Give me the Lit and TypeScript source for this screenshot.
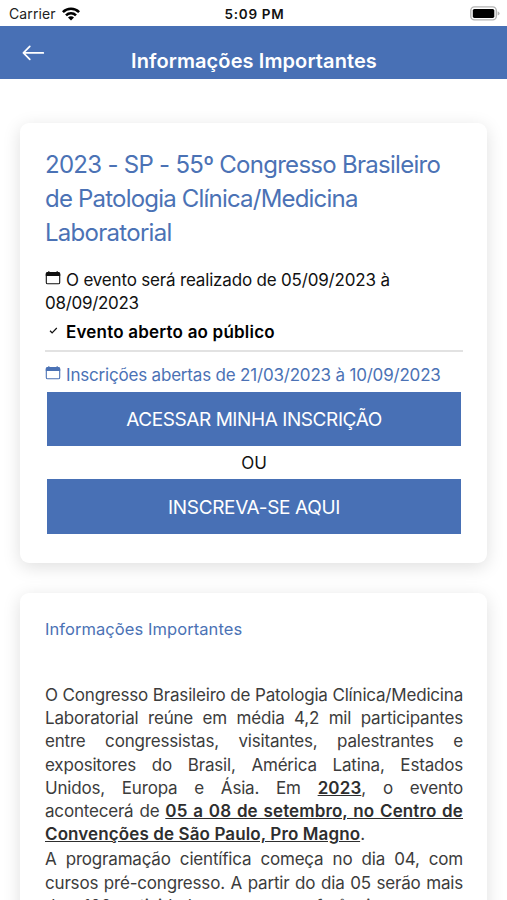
import { LitElement, html, css } from "lit";
import { customElement } from "lit/decorators.js";

const calendar = html`<svg class="cal" viewBox="0 0 16 14" width="16" height="14" aria-hidden="true">
  <path d="M3.8 .2v2M12.2 .2v2" stroke="currentColor" stroke-width="1.3" />
  <rect x="1.3" y="1.7" width="13.4" height="11.1" rx="1.4" fill="none" stroke="currentColor" stroke-width="1.1" />
  <path d="M.8 5V2.7Q.8 1.1 2.4 1.1H13.6Q15.2 1.1 15.2 2.7V5Z" fill="currentColor" />
</svg>`;

@customElement("app-root")
export class AppRoot extends LitElement {
  static styles = css`
    :host {
      display: flex;
      flex-direction: column;
      height: 900px;
      overflow: hidden;
      background: #fff;
      color: #111;
      font: 400 17px/23px Inter, "Liberation Sans", sans-serif;
    }
    * { box-sizing: border-box; }
    svg { display: block; flex: none; }
    .status {
      flex: none;
      height: 26px;
      display: grid;
      grid-template-columns: 1fr auto 1fr;
      align-items: center;
      padding: 1px 7px 0 9px;
      font-size: 14px;
      line-height: 20px;
    }
    .carrier { display: flex; align-items: center; gap: 6px; color: #222; }
    .c { letter-spacing: 0.1px; }
    .time { font-weight: 600; font-size: 13.5px; letter-spacing: 0.7px; }
    .battery { justify-self: end; }
    .bar {
      flex: none;
      height: 53px;
      background: #4870b5;
      color: #fff;
      display: grid;
      grid-template-columns: 60px 1fr 60px;
    }
    .back { margin: 19px 0 0 22px; }
    .bar h1 {
      margin: 22px 0 0;
      padding-left: 1px;
      text-align: center;
      font-size: 20px;
      line-height: 26px;
      font-weight: 600;
      letter-spacing: 0.1px;
      white-space: nowrap;
    }
    main { flex: 1; min-height: 0; padding: 44px 20px 0; }
    .card {
      background: #fff;
      border-radius: 9px;
      box-shadow: 0 4px 18px rgba(0, 0, 0, 0.13);
      padding: 25px 24px 0 25px;
      white-space: nowrap;
    }
    .event { height: 440px; }
    .info { height: 400px; margin-top: 30px; }
    .line { display: block; }
    h2 {
      margin: 0;
      color: #4b72b5;
      font-size: 24px;
      line-height: 34px;
      font-weight: 400;
      letter-spacing: -0.72px;
    }
    h2 .line:nth-child(2) { letter-spacing: -0.8px; }
    .when { margin-top: 19px; letter-spacing: -0.18px; }
    .when .line { letter-spacing: -0.3px; }
    .row { display: flex; gap: 5px; }
    .cal { margin-top: 2px; }
    .open { margin-top: 6px; color: #000; font-weight: 600; letter-spacing: 0.2px; }
    .tick { margin: 5px 0 0; }
    .rule { height: 2px; background: #e2e2e2; margin-top: 6px; }
    .signup { margin-top: 12px; color: #4b72b5; letter-spacing: -0.19px; }
    .btn {
      display: block;
      width: 414px;
      height: 54px;
      margin: 5px 0 0 2px;
      padding: 0;
      border: 0;
      background: #4870b5;
      color: #fff;
      font: inherit;
      font-size: 19px;
      line-height: 56px;
      letter-spacing: -0.42px;
      text-align: center;
    }
    .or { text-align: center; height: 24px; line-height: 24px; margin: 5px 0 4px; }
    .or + .btn { height: 55px; margin-top: 0; letter-spacing: -0.34px; line-height: 58px; }
    h3 {
      margin: 0;
      font-size: 16.5px;
      line-height: 22px;
      font-weight: 400;
      letter-spacing: 0.07px;
      color: #4b72b5;
    }
    .text { color: #3c3c3c; margin: 44px 0 0; letter-spacing: -0.19px; }
    .text + .text { margin-top: 2px; }
    .text .line { text-align: justify; text-align-last: justify; height: 23.2px; }
    .text .end { text-align-last: left; }
    b { font-weight: 600; text-decoration: underline; color: #2e2e2e; letter-spacing: 0.11px; }
  `;

  render() {
    return html`
      <div class="status">
        <div class="carrier">
          <span class="c">Carrier</span>
          <svg width="18" height="14" viewBox="0 0 18 14" aria-hidden="true">
            <g fill="none" stroke="#000" stroke-width="2.6">
              <path d="M.9 5.1A11.5 11.5 0 0 1 17.1 5.1" />
              <path d="M4 8.3A7.1 7.1 0 0 1 14 8.3" />
            </g>
            <path d="M6 10.4A4.2 4.2 0 0 1 12 10.4L9 13.5Z" />
          </svg>
        </div>
        <div class="time">5:09 PM</div>
        <svg class="battery" width="31" height="15" viewBox="0 0 31 15" aria-hidden="true">
          <rect x="1.8" y=".9" width="25.5" height="13" rx="3.6" fill="#fff" stroke="#b4b4b4" stroke-width="1.4" />
          <rect x="3.8" y="2.9" width="21.5" height="9" rx="1.6" />
          <path d="M28.6 5.2Q30.6 6 30.6 7.4T28.6 9.6Z" fill="#b4b4b4" />
        </svg>
      </div>
      <header class="bar">
        <svg class="back" width="23" height="16" viewBox="0 0 23 16" aria-label="Voltar">
          <path d="M21.3 7.9H1.5M7.8 1.4L1.4 7.9L7.8 14.4" fill="none" stroke="#fff" stroke-width="1.7" stroke-linecap="round" stroke-linejoin="round" />
        </svg>
        <h1>Informações Importantes</h1>
      </header>
      <main>
        <section class="card event">
          <h2>
            <span class="line">2023 - SP - 55º Congresso Brasileiro</span>
            <span class="line">de Patologia Clínica/Medicina</span>
            <span class="line">Laboratorial</span>
          </h2>
          <div class="when">
            <div class="row">${calendar}<span>O evento será realizado de 05/09/2023 à</span></div>
            <span class="line">08/09/2023</span>
          </div>
          <div class="row open">
            <svg class="tick" width="16" height="10" viewBox="0 0 16 10" aria-hidden="true">
              <path d="M5 4.8L7.1 6.8L11.8 2" fill="none" stroke="#111" stroke-width="1.2" />
            </svg>
            <span>Evento aberto ao público</span>
          </div>
          <div class="rule"></div>
          <div class="row signup">${calendar}<span>Inscrições abertas de 21/03/2023 à 10/09/2023</span></div>
          <button class="btn"><span>ACESSAR MINHA INSCRIÇÃO</span></button>
          <div class="or">OU</div>
          <button class="btn"><span>INSCREVA-SE AQUI</span></button>
        </section>
        <section class="card info">
          <h3>Informações Importantes</h3>
          <p class="text">
            <span class="line">O Congresso Brasileiro de Patologia Clínica/Medicina</span>
            <span class="line">Laboratorial reúne em média 4,2 mil participantes</span>
            <span class="line">entre congressistas, visitantes, palestrantes e</span>
            <span class="line">expositores do Brasil, América Latina, Estados</span>
            <span class="line">Unidos, Europa e Ásia. Em <b>2023</b>, o evento</span>
            <span class="line">acontecerá de <b>05 a 08 de setembro, no Centro de</b></span>
            <span class="line end"><b>Convenções de São Paulo, Pro Magno</b>.</span>
          </p>
          <p class="text">
            <span class="line">A programação científica começa no dia 04, com</span>
            <span class="line">cursos pré-congresso. A partir do dia 05 serão mais</span>
            <span class="line">de 100 atividades, com conferências, mesas</span>
          </p>
        </section>
      </main>
    `;
  }
}
